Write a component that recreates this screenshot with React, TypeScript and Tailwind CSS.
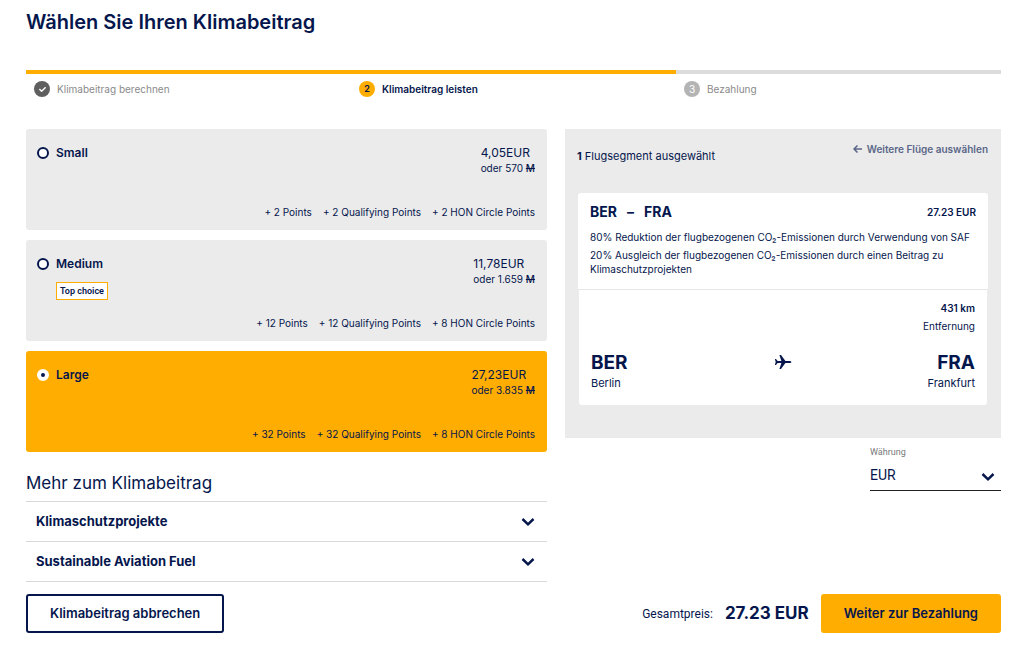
import React, { useState } from "react";
import { FaCheck } from "react-icons/fa";

interface Offer {
  id: string;
  name: string;
  price: string;
  miles: string;
  points: number;
  qualifying: number;
  hon: number;
  topChoice?: boolean;
}

const offers: Offer[] = [
  { id: "small", name: "Small", price: "4,05", miles: "570", points: 2, qualifying: 2, hon: 2 },
  { id: "medium", name: "Medium", price: "11,78", miles: "1.659", points: 12, qualifying: 12, hon: 8, topChoice: true },
  { id: "large", name: "Large", price: "27,23", miles: "3.835", points: 32, qualifying: 32, hon: 8 },
];

const topics = ["Klimaschutzprojekte", "Sustainable Aviation Fuel"];

const Chevron: React.FC<{ className?: string }> = ({ className }) => (
  <svg className={className} width="14" height="10" viewBox="0 0 14 10" fill="none" stroke="#05164d" strokeWidth="2.5" aria-hidden="true">
    <path d="M1.5 2 L7 7.3 L12.5 2" />
  </svg>
);

const Plane: React.FC = () => (
  <svg width="18" height="16" viewBox="0 0 18 16" fill="#05164d" aria-hidden="true">
    <path d="M17.4 8c0-.6-1-1.1-2-1.1h-4L7 .9H5.4l2 6H3.6L2 5H.9L1.7 8 .9 11H2l1.6-1.9h3.8l-2 6H7l4.4-6h4c1 0 2-.5 2-1.1z" />
  </svg>
);

const Stepper: React.FC = () => (
  <div className="mt-[34px]">
    <div className="h-1 bg-[#dcdcdc]">
      <div className="h-1 w-2/3 bg-[#ffad00]" />
    </div>
    <ol className="grid grid-cols-3 pt-[7px] text-[10px] leading-4">
      <li className="flex items-start gap-[7px] pl-2 text-[#8a8a8a]">
        <span className="flex size-4 items-center justify-center rounded-full bg-[#5f5f5f] text-[7px] text-white">
          <FaCheck />
        </span>
        Klimabeitrag berechnen
      </li>
      <li className="flex items-start gap-[7px] pl-2 font-semibold">
        <span className="flex size-4 items-center justify-center rounded-full bg-[#ffad00] text-[9px]">2</span>
        Klimabeitrag leisten
      </li>
      <li className="flex items-start gap-[7px] pl-2 text-[#8a8a8a]">
        <span className="flex size-4 items-center justify-center rounded-full bg-[#b4b4b4] text-white">3</span>
        Bezahlung
      </li>
    </ol>
  </div>
);

const App: React.FC = () => {
  const [selected, setSelected] = useState("large");
  const [currency, setCurrency] = useState("EUR");

  return (
    <main className="bg-white pt-2 pr-[23px] pb-4 pl-[26px] font-['Inter',sans-serif] text-[#05164d]">
      <h1 className="text-[20px] leading-7 font-semibold">Wählen Sie Ihren Klimabeitrag</h1>
      <Stepper />

      <div className="mt-8 grid grid-cols-[521fr_436fr] gap-x-[18px]">
        <div>
          <div className="flex flex-col gap-2.5">
            {offers.map((offer) => (
              <label
                key={offer.id}
                className={`flex min-h-[101px] flex-col justify-between rounded-[3px] pt-4 pr-3 pb-2.5 pl-[11px] ${
                  selected === offer.id ? "bg-[#ffad00]" : "bg-[#ebebeb]"
                }`}
              >
                <span className="flex items-start justify-between">
                  <span className="flex items-start gap-[7px]">
                    <input
                      type="radio"
                      name="offer"
                      value={offer.id}
                      checked={selected === offer.id}
                      onChange={() => setSelected(offer.id)}
                      className="mt-0.5 size-3 appearance-none rounded-full border-2 border-[#05164d] bg-white checked:border-4 checked:border-white checked:bg-[#05164d]"
                    />
                    <span className="flex flex-col items-start text-[12px] leading-4 font-semibold">
                      {offer.name}
                      {offer.topChoice && (
                        <span className="mt-2.5 border border-[#ffad00] bg-white px-[3px] font-['Roboto',sans-serif] text-[9px]">
                          Top choice
                        </span>
                      )}
                    </span>
                  </span>
                  <span className="flex flex-col text-[10px] leading-[14px]">
                    <span className="text-[12px] leading-4">{offer.price}EUR</span>
                    <span>
                      oder {offer.miles} <s className="font-medium">M</s>
                    </span>
                  </span>
                </span>
                <span className="flex justify-end gap-[11px] text-[10px] leading-4">
                  <span>+ {offer.points} Points</span>
                  <span>+ {offer.qualifying} Qualifying Points</span>
                  <span>+ {offer.hon} HON Circle Points</span>
                </span>
              </label>
            ))}
          </div>

          <h2 className="mt-[19px] text-[17px] leading-6">Mehr zum Klimabeitrag</h2>
          <div className="mt-1.5 border-t border-[#d9d9d9]">
            {topics.map((topic) => (
              <button
                key={topic}
                type="button"
                className="flex h-10 w-full items-center justify-between border-b border-[#d9d9d9] pr-3 pl-2.5 text-[13px] font-bold"
              >
                {topic}
                <Chevron />
              </button>
            ))}
          </div>
        </div>

        <div>
          <section className="bg-[#ebebeb] pt-3 pr-[13px] pb-[33px] pl-3">
            <div className="flex justify-between text-[11px] leading-4">
              <p className="pt-[7px]">
                <b>1</b> Flugsegment ausgewählt
              </p>
              <a href="#" className="flex items-center gap-[5px] self-start text-[10px] font-semibold text-[#5a6788]">
                <svg width="9" height="8" viewBox="0 0 9 8" fill="none" stroke="currentColor" strokeWidth="1.5" aria-hidden="true">
                  <path d="M9 4H1M4.5 .5L1 4l3.5 3.5" />
                </svg>
                Weitere Flüge auswählen
              </a>
            </div>

            <div className="mt-[29px] ml-px text-[10px]">
              <div className="rounded-t-[3px] bg-white px-3 pt-[11px] pb-[13px] leading-[14px]">
                <div className="flex justify-between leading-4">
                  <h3 className="flex gap-2.5 text-[14px] font-bold">
                    <span>BER</span>
                    <span>–</span>
                    <span>FRA</span>
                  </h3>
                  <span className="font-semibold">27.23 EUR</span>
                </div>
                <p className="mt-2.5">80% Reduktion der flugbezogenen CO₂-Emissionen durch Verwendung von SAF</p>
                <p className="mt-1">
                  20% Ausgleich der flugbezogenen CO₂-Emissionen durch einen Beitrag zu Klimaschutzprojekten
                </p>
              </div>
              <div className="mx-px rounded-b-[3px] border-t border-[#e6e6e6] bg-white px-3 pt-2.5 pb-3.5 leading-4">
                <div className="text-right">
                  <p className="font-semibold">431 km</p>
                  <p className="mt-0.5">Entfernung</p>
                </div>
                <div className="mt-[17px] grid grid-cols-3 text-[11px]">
                  <div>
                    <p className="text-[19px] leading-6 font-bold">BER</p>
                    <p>Berlin</p>
                  </div>
                  <div className="flex justify-center pt-[3px]">
                    <Plane />
                  </div>
                  <div className="text-right">
                    <p className="text-[19px] leading-6 font-bold">FRA</p>
                    <p>Frankfurt</p>
                  </div>
                </div>
              </div>
            </div>
          </section>

          <div className="mt-1.5 ml-auto w-[131px] font-['Roboto',sans-serif]">
            <label htmlFor="currency" className="block text-[9px] leading-4 text-[#777]">
              Währung
            </label>
            <div className="relative">
              <select
                id="currency"
                value={currency}
                onChange={(e) => setCurrency(e.target.value)}
                className="h-[31px] w-full appearance-none border-b border-[#222] bg-transparent pt-px text-[14px]"
              >
                <option>EUR</option>
                <option>USD</option>
              </select>
              <Chevron className="pointer-events-none absolute top-3 right-1.5" />
            </div>
          </div>
        </div>
      </div>

      <footer className="mt-3 flex items-center justify-between">
        <button type="button" className="h-[39px] rounded-[3px] border-2 border-[#05164d] px-[22px] text-[13px] font-semibold">
          Klimabeitrag abbrechen
        </button>
        <div className="flex items-center">
          <span className="font-['Roboto',sans-serif] text-[12px]">Gesamtpreis:</span>
          <strong className="mr-3 ml-3 text-[17px] font-bold">27.23 EUR</strong>
          <button type="button" className="h-[39px] rounded-[3px] bg-[#ffad00] px-[23px] text-[13px] font-semibold">
            Weiter zur Bezahlung
          </button>
        </div>
      </footer>
    </main>
  );
};

export default App;
